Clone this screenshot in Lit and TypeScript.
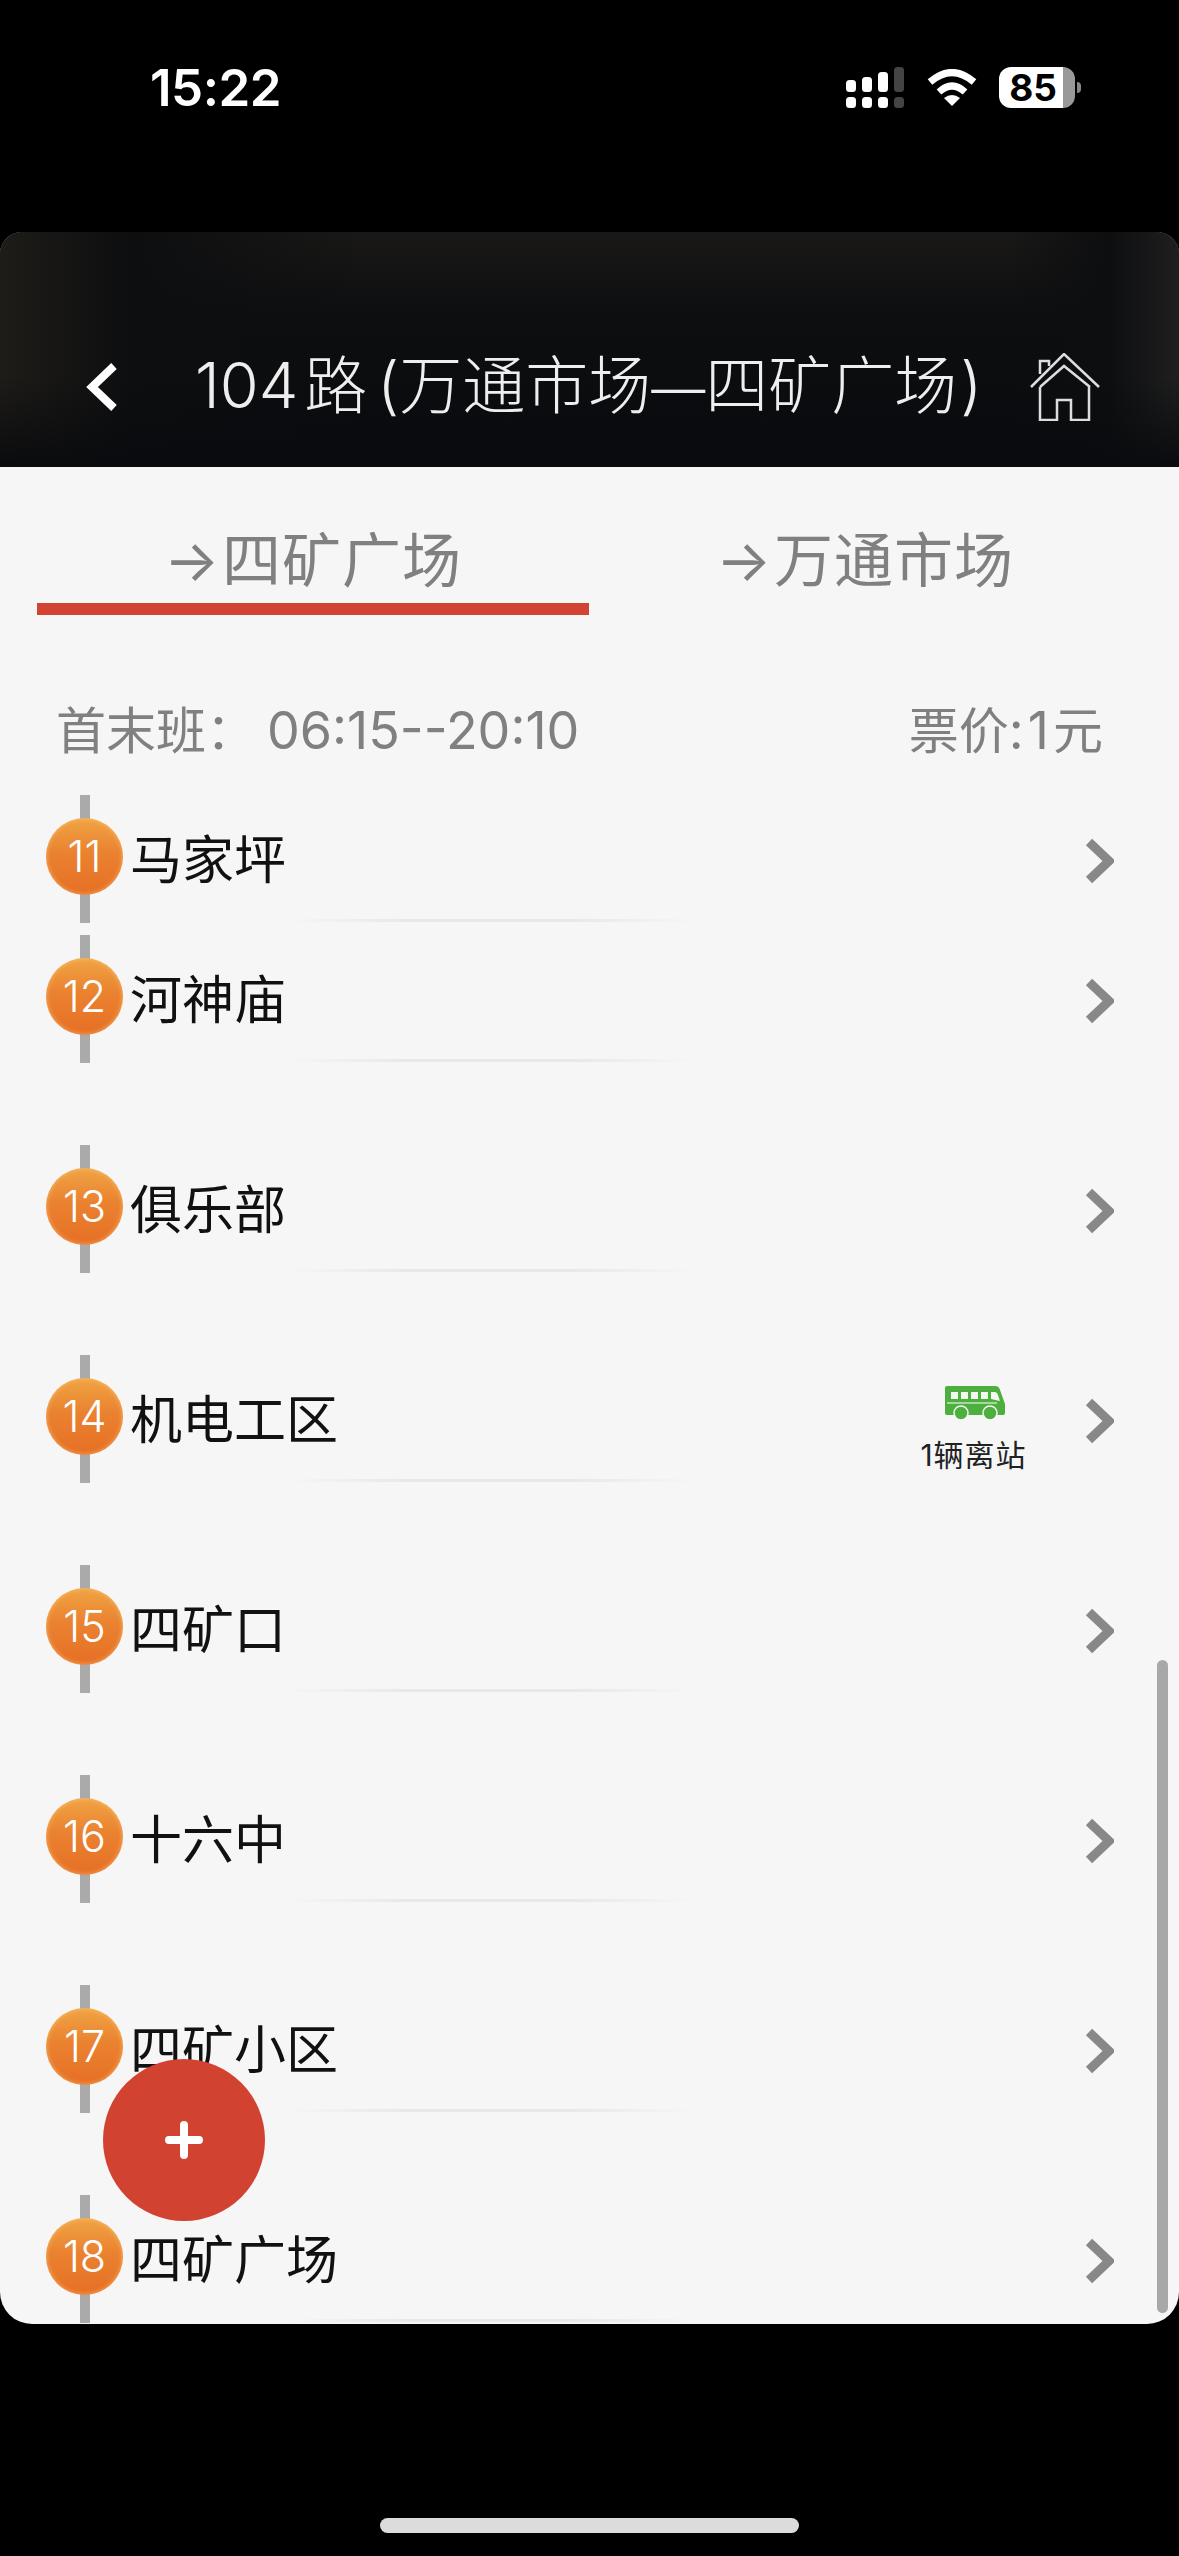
import { LitElement, html, css, svg } from 'lit';
import { customElement, state } from 'lit/decorators.js';

interface Station {
  no: number;
  name: string;
  buses?: string;
}

const chevron = svg`<path d="M5 5l20 19L5 43" fill="none" stroke="#888" stroke-width="9"/>`;

@customElement('app-root')
export class AppRoot extends LitElement {
  @state()
  stations: Station[] = [
    { no: 11, name: '马家坪' },
    { no: 12, name: '河神庙' },
    { no: 13, name: '俱乐部' },
    { no: 14, name: '机电工区', buses: '1辆离站' },
    { no: 15, name: '四矿口' },
    { no: 16, name: '十六中' },
    { no: 17, name: '四矿小区' },
    { no: 18, name: '四矿广场' },
  ];

  static override styles = css`
    :host {
      display: block;
      height: 2556px;
      overflow: hidden;
      background: #000;
      font-family: Inter, 'Noto Sans CJK SC', sans-serif;
    }

    .status {
      height: 232px;
      box-sizing: border-box;
      padding: 67px 98px 0 150px;
      display: flex;
      align-items: flex-start;
      color: #fff;
    }

    .time {
      font: 600 51px/41px Inter, 'Liberation Sans', sans-serif;
      letter-spacing: -0.5px;
      flex: 1;
    }

    .wifi {
      margin-left: 23px;
      margin-right: 22px;
      margin-top: 2px;
    }

    .battery {
      width: 76px;
      height: 41px;
      border-radius: 12px;
      background: linear-gradient(to right, #fff 84%, #999 84%);
      color: #000;
      font: 700 37px/41px Inter, 'Liberation Sans', sans-serif;
      text-align: center;
      padding-right: 8px;
      box-sizing: border-box;
    }

    .battery-tip {
      width: 4px;
      height: 11px;
      margin: 15px 0 0 2px;
      background: #888;
      border-radius: 0 4px 4px 0;
    }

    .panel {
      position: relative;
      height: 2092px;
      overflow: hidden;
      background: #f6f6f7;
      border-radius: 22px 22px 32px 32px;
    }

    .header {
      height: 235px;
      box-sizing: border-box;
      padding: 118px 0 0 84px;
      background:
        linear-gradient(to bottom, transparent 62%, #0a0b0e 100%),
        linear-gradient(to right, #1e1c18 0, #0d0e10 11%, transparent 30%, transparent 86%, #0d0e10 94%, #1f1f1f 100%),
        linear-gradient(to bottom, #191816 0, #0d0e10 35%, #0a0b0e 100%);
    }

    .header-row {
      display: flex;
      align-items: center;
      height: 74px;
    }

    .title {
      margin-left: 75px;
      width: 835px;
      flex: none;
      font-size: 63px;
      font-weight: 300;
      line-height: 74px;
      color: #eee;
      white-space: nowrap;
    }

    .title .road {
      margin: 0 10px 0 6px;
    }

    .title .dash {
      font-size: 54px;
    }

    .title .close {
      margin-left: 3px;
    }

    .tabs {
      display: flex;
      padding: 0 38px 0 37px;
    }

    .tab {
      flex: 1;
      box-sizing: border-box;
      padding: 56px 0 5px;
      border-bottom: 12px solid transparent;
      text-align: center;
      font-size: 59px;
      line-height: 74px;
      color: #808080;
      letter-spacing: 1px;
    }

    .tab.active {
      border-bottom-color: #d24333;
    }

    .arrow {
      display: inline-block;
      width: 58px;
      font-size: 58px;
      text-align: left;
      vertical-align: 1px;
    }

    .info {
      display: flex;
      justify-content: space-between;
      margin: 86px 0 34px;
      padding: 0 76px 0 56px;
      font-size: 50px;
      line-height: 60px;
      color: #808080;
    }

    .times {
      margin-left: 11px;
      font-size: 52px;
    }

    .fare {
      font-size: 52px;
      letter-spacing: 4px;
    }

    .row {
      display: flex;
      height: 210px;
      padding-left: 46px;
    }

    .row.first {
      height: 140px;
    }

    .marker {
      width: 77px;
      height: 128px;
      flex: none;
      display: grid;
      justify-items: center;
    }

    .rail {
      grid-area: 1 / 1;
      width: 10px;
      background: #aaa;
    }

    .dot {
      grid-area: 1 / 1;
      margin-top: 23px;
      width: 77px;
      height: 77px;
      border-radius: 50%;
      background: linear-gradient(to bottom, #f0a444 0, #ea8230 45%, #e66f25 100%);
      box-shadow: inset 0 0 5px rgba(255, 205, 130, 0.7);
      color: #fff;
      font-size: 43px;
      font-weight: 300;
      line-height: 77px;
      text-align: center;
    }

    .main {
      flex: 1;
      margin-left: 7px;
    }

    .name {
      height: 124px;
      font-size: 52px;
      line-height: 132px;
      color: #111;
      white-space: nowrap;
    }

    .divider {
      height: 3px;
      width: 410px;
      margin-left: 155px;
      background: linear-gradient(to right, transparent, #e8e8e8 30%, #e8e8e8 70%, transparent);
    }

    .bus {
      width: 105px;
      margin: 31px 58px 0 0;
      display: flex;
      flex-direction: column;
      align-items: center;
      font-size: 30px;
      line-height: 36px;
      letter-spacing: 1px;
      color: #222;
      white-space: nowrap;
    }

    .bus svg {
      margin: 0 0 17px 2px;
    }

    .chevron {
      margin: 42px 65px 0 0;
      flex: none;
    }

    .scrollbar {
      position: absolute;
      top: 1428px;
      right: 11px;
      width: 11px;
      height: 653px;
      border-radius: 6px;
      background: #a8a8a8;
    }

    .fab {
      position: absolute;
      left: 103px;
      top: 1827px;
      width: 162px;
      height: 162px;
      border-radius: 50%;
      background: #d24231;
      display: flex;
      align-items: center;
      justify-content: center;
    }

    .home-bar {
      width: 419px;
      height: 15px;
      margin: 194px auto 0;
      border-radius: 8px;
      background: #dcdcdc;
    }
  `;

  private renderStatus() {
    return html`
      <div class="status">
        <div class="time">15:22</div>
        <svg width="58" height="41" viewBox="0 0 58 41" fill="#fff">
          <rect x="0" y="13" width="10" height="12" rx="3.5" />
          <rect x="16" y="10" width="10" height="15" rx="3.5" />
          <rect x="32" y="5" width="10" height="20" rx="3.5" />
          <rect x="48" y="0" width="10" height="25" rx="3.5" fill="#444" />
          <rect x="0" y="30" width="10" height="11" rx="3.5" />
          <rect x="16" y="30" width="10" height="11" rx="3.5" />
          <rect x="32" y="30" width="10" height="11" rx="3.5" />
          <rect x="48" y="30" width="10" height="11" rx="3.5" fill="#444" />
        </svg>
        <svg class="wifi" width="50" height="37" viewBox="0 0 50 37">
          <path d="M3 13Q25-6 47 13" fill="none" stroke="#fff" stroke-width="7" />
          <path d="M12 23Q25 11 38 23" fill="none" stroke="#fff" stroke-width="7" />
          <path d="M17 29Q25 23 33 29L25 37Z" fill="#fff" />
        </svg>
        <div class="battery">85</div>
        <div class="battery-tip"></div>
      </div>
    `;
  }

  private renderHeader() {
    return html`
      <div class="header">
        <div class="header-row">
          <svg width="36" height="50" viewBox="0 0 36 50">
            <path d="M30 4L8 25l22 21" fill="none" stroke="#fff" stroke-width="8" />
          </svg>
          <div class="title">104<span class="road">路</span>(万通市场<span class="dash">—</span>四矿广场<span class="close">)</span></div>
          <svg width="70" height="68" viewBox="0 0 70 68" fill="none" stroke="#ddd" stroke-width="2.5">
            <path d="M1 34L34 1l35 33" />
            <path d="M10 34L34 13l26 21" />
            <path d="M10 34v33h17V47h14v20h18V34" />
            <path d="M10 21V8h9v5" />
          </svg>
        </div>
      </div>
    `;
  }

  private renderStation(s: Station, i: number) {
    return html`
      <div class="row ${i === 0 ? 'first' : ''}">
        <div class="marker">
          <div class="rail"></div>
          <div class="dot">${s.no}</div>
        </div>
        <div class="main">
          <div class="name">${s.name}</div>
          <div class="divider"></div>
        </div>
        ${s.buses
          ? html`<div class="bus">
              <svg width="60" height="34" viewBox="0 0 60 34">
                <path d="M2 0h48q4 0 5 4l5 14v9q0 2-3 2H3q-3 0-3-2V2q0-2 2-2z" fill="#4caf3e" />
                <path d="M6 6h7v7H6zM16 6h7v7h-7zM26 6h7v7h-7zM36 6h7v7h-7zM46 6h4q2 0 3 3l2 6-9-2z" fill="#f2f8f0" />
                <rect x="2" y="16" width="50" height="2" fill="#a5d89c" />
                <circle cx="16" cy="27" r="7" fill="#4caf3e" stroke="#f6f6f7" stroke-width="1.5" />
                <circle cx="45" cy="27" r="7" fill="#4caf3e" stroke="#f6f6f7" stroke-width="1.5" />
              </svg>
              ${s.buses}
            </div>`
          : ''}
        <svg class="chevron" width="30" height="48" viewBox="0 0 30 48">${chevron}</svg>
      </div>
    `;
  }

  override render() {
    return html`
      ${this.renderStatus()}
      <div class="panel">
        ${this.renderHeader()}
        <div class="tabs">
          <div class="tab active"><span class="arrow">→</span>四矿广场</div>
          <div class="tab"><span class="arrow">→</span>万通市场</div>
        </div>
        <div class="info">
          <span>首末班：<span class="times">06:15--20:10</span></span>
          <span>票价<span class="fare">:1</span>元</span>
        </div>
        ${this.stations.map((s, i) => this.renderStation(s, i))}
        <div class="scrollbar"></div>
        <div class="fab">
          <svg width="38" height="38" viewBox="0 0 38 38">
            <path d="M19 4v30M4 19h30" stroke="#fff" stroke-width="8" stroke-linecap="round" />
          </svg>
        </div>
      </div>
      <div class="home-bar"></div>
    `;
  }
}

declare global {
  interface HTMLElementTagNameMap {
    'app-root': AppRoot;
  }
}
